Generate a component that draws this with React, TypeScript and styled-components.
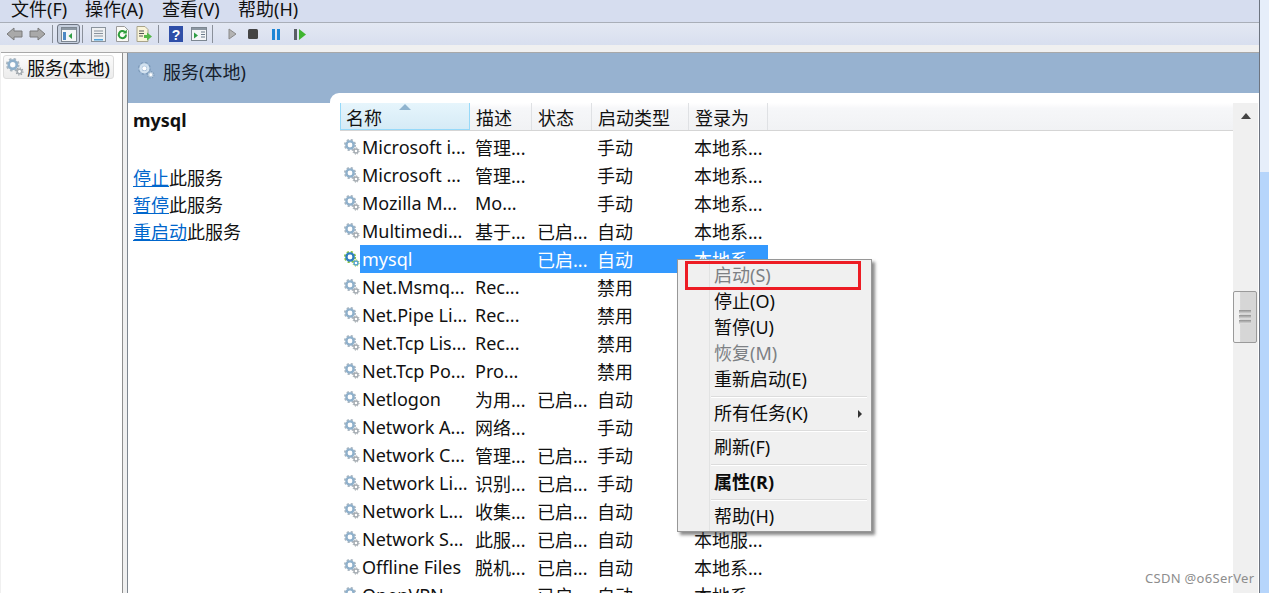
import React from "react";
import styled, { createGlobalStyle } from "styled-components";

const FONT = `"Noto Sans", "Noto Sans CJK SC", sans-serif`;

const GlobalStyle = createGlobalStyle`
  html, body {
    margin: 0;
    padding: 0;
    overflow: hidden;
  }
  body {
    font-family: ${FONT};
    color: #111;
  }
`;

const Page = styled.div`
  position: relative;
  width: 1269px;
  height: 593px;
  overflow: hidden;
  display: flex;
  background: #f0f0f0;
`;

const WindowBody = styled.div`
  flex: 1;
  min-width: 0;
  display: flex;
  flex-direction: column;
  padding-left: 1px;
  border-right: 1px solid #6d7480;
`;

const Glass = styled.div`
  width: 9px;
  background: linear-gradient(#e6eefa 0, #e6eefa 172px, #b6d5fb 172px);
`;

const MenuBar = styled.div`
  height: 22px;
  flex: none;
  display: flex;
  overflow: hidden;
  background: #d6ddef;
  border-bottom: 1px solid #a9aeb8;
  margin-left: -1px;
`;

const MenuItem = styled.span<{ $w: number }>`
  width: ${(p) => p.$w}px;
  flex: none;
  font-size: 18px;
  line-height: 18px;
  white-space: nowrap;
  &:first-child {
    margin-left: 11px;
  }
`;

const ToolBar = styled.div`
  height: 22px;
  flex: none;
  display: flex;
  align-items: center;
  margin-left: -1px;
  background: linear-gradient(#e3e8f3, #d8dfef);
`;

const ToolIcon = styled.span<{ $left?: number; $w: number }>`
  flex: none;
  width: ${(p) => p.$w}px;
  margin-left: ${(p) => p.$left ?? 0}px;
  height: 20px;
  display: flex;
  align-items: center;
  justify-content: center;
`;

const ToolPressed = styled(ToolIcon)`
  border: 1px solid #6e7582;
  border-radius: 3px;
  background: #c6cfde;
  box-sizing: border-box;
`;

const ToolSep = styled.span<{ $left: number }>`
  flex: none;
  width: 1px;
  height: 18px;
  margin-left: ${(p) => p.$left}px;
  background: #8a909a;
`;

const Spacer = styled.div`
  height: 7px;
  flex: none;
  background: #f0f0f0;
  border-bottom: 1px solid #a8a8a8;
`;

const Split = styled.div`
  flex: 1;
  min-height: 0;
  display: flex;
`;

const TreePane = styled.div`
  width: 122px;
  flex: none;
  background: #fff;
  padding: 2px 8px 0 2px;
  box-sizing: border-box;
  border-right: 1px solid #8f8f8f;
`;

const TreeItem = styled.div`
  height: 24px;
  box-sizing: border-box;
  display: flex;
  align-items: center;
  gap: 3px;
  padding-left: 2px;
  border: 1px solid #dcdcdc;
  border-radius: 3px;
  background: linear-gradient(#fbfbfb, #ececec);
  font-size: 18px;
  white-space: nowrap;
`;

const Sash = styled.div`
  width: 4px;
  flex: none;
  background: #f0f0f0;
  border-right: 1px solid #7f8790;
`;

const ContentPane = styled.div`
  flex: 1;
  min-width: 0;
  display: flex;
  flex-direction: column;
  background: #97b2d0;
`;

const Banner = styled.div`
  height: 40px;
  flex: none;
  box-sizing: border-box;
  display: flex;
  align-items: center;
  gap: 8px;
  padding: 0 0 5px 10px;
  font-size: 18px;
  color: #16202c;
`;

const Lower = styled.div`
  flex: 1;
  min-height: 0;
  display: flex;
`;

const Extended = styled.div`
  width: 202px;
  flex: none;
  margin-top: 10px;
  padding: 6px 0 0 5px;
  box-sizing: border-box;
  background: #fff;
  font-size: 18px;
`;

const ServiceName = styled.div`
  font-weight: 700;
  line-height: 22px;
  margin-bottom: 34px;
`;

const ActionLine = styled.div`
  line-height: 27px;
  height: 27px;
  white-space: nowrap;
`;

const ActionLink = styled.a`
  color: #0066cc;
  text-decoration: underline;
`;

const ListPane = styled.div`
  flex: 1;
  min-width: 0;
  display: flex;
  background: #fff;
  border-top-left-radius: 9px;
  padding: 10px 1px 0 10px;
`;

const ListColumn = styled.div`
  flex: 1;
  min-width: 0;
`;

const HeaderRow = styled.div`
  height: 28px;
  display: flex;
  margin-bottom: 2px;
  background: linear-gradient(#fff, #f6f7f9 20%, #f1f2f4);
  border-bottom: 1px solid #d5d5d5;
  box-sizing: border-box;
`;

const HeaderCell = styled.div<{ $w: number; $sorted?: boolean }>`
  position: relative;
  width: ${(p) => p.$w}px;
  flex: none;
  box-sizing: border-box;
  padding-left: ${(p) => (p.$sorted ? 5 : 6)}px;
  font-size: 18px;
  line-height: 31px;
  white-space: nowrap;
  border-right: 1px solid ${(p) => (p.$sorted ? "#96d9f9" : "#dfe1e4")};
  ${(p) =>
    p.$sorted &&
    `border-left: 1px solid #96d9f9;
     border-bottom: 1px solid #96d9f9;
     background: linear-gradient(#e6f5fc, #d6ebf6);`}
`;

const SortArrow = styled.svg`
  position: absolute;
  left: 58px;
  top: 1px;
`;

const Row = styled.div`
  height: 28px;
  display: flex;
  align-items: center;
  font-size: 18px;
  white-space: nowrap;
`;

const GearCell = styled.span`
  width: 20px;
  padding-left: 4px;
  box-sizing: border-box;
  flex: none;
  display: flex;
  align-items: center;
`;

const SelectedBand = styled.div<{ $on: boolean }>`
  display: flex;
  align-items: center;
  height: 28px;
  width: 408px;
  flex: none;
  ${(p) => p.$on && "background: #3399ff; color: #fff;"}
`;

const Cell = styled.span<{ $w: number; $pad?: number }>`
  width: ${(p) => p.$w}px;
  flex: none;
  box-sizing: border-box;
  padding-left: ${(p) => p.$pad ?? 5}px;
  overflow: hidden;
`;

const ScrollBar = styled.div`
  position: relative;
  width: 25px;
  flex: none;
  background: #f0f0f0;
  box-sizing: border-box;
`;

const ScrollUp = styled.svg`
  position: absolute;
  left: 8px;
  top: 10px;
`;

const Thumb = styled.div`
  position: absolute;
  left: 0;
  top: 188px;
  width: 24px;
  height: 52px;
  box-sizing: border-box;
  border: 1px solid #9a9a9a;
  border-radius: 2px;
  background: linear-gradient(90deg, #f2f2f2 0, #f2f2f2 25%, #d6d6d6 30%, #d6d6d6 100%);
  display: flex;
  flex-direction: column;
  align-items: center;
  justify-content: center;
  gap: 1px;
`;

const Grip = styled.span`
  width: 12px;
  height: 4px;
  background: linear-gradient(#8f8f8f, #e4e4e4);
`;

const ContextMenu = styled.div`
  position: absolute;
  left: 677px;
  top: 259px;
  width: 195px;
  height: 273px;
  box-sizing: border-box;
  padding: 2px 0 0 1px;
  font-size: 18px;
  color: #0c0c0c;
  background: linear-gradient(90deg, #f0f0f0 0, #f0f0f0 31px, #e2e3e3 31px, #e2e3e3 32px, #f0f0f0 32px);
  border: 1px solid #979797;
  box-shadow: 3px 3px 3px rgba(60, 60, 60, 0.6);
`;

const MenuEntry = styled.div<{ $h: number; $disabled?: boolean; $bold?: boolean }>`
  position: relative;
  height: ${(p) => p.$h}px;
  line-height: ${(p) => p.$h}px;
  padding-left: 35px;
  white-space: nowrap;
  color: ${(p) => (p.$disabled ? "#7d8084" : "inherit")};
  font-weight: ${(p) => (p.$bold ? 700 : 400)};
`;

const MenuDivider = styled.div<{ $top?: number }>`
  height: 1px;
  margin: ${(p) => p.$top ?? 3}px 4px 3px 32px;
  background: #dcdcdc;
  box-shadow: 0 1px 0 #fff;
`;

const SubArrow = styled.span`
  position: absolute;
  right: 9px;
  top: 10px;
  border-left: 4px solid #333;
  border-top: 4px solid transparent;
  border-bottom: 4px solid transparent;
`;

const Highlight = styled.div`
  position: absolute;
  left: 685px;
  top: 261px;
  width: 176px;
  height: 29px;
  box-sizing: border-box;
  border: 3px solid #ed1c24;
`;

const Watermark = styled.div`
  position: absolute;
  left: 1145px;
  top: 569px;
  font-size: 13px;
  line-height: 18px;
  letter-spacing: 0.3px;
  color: #8d8d8d;
`;

type GearTone = "idle" | "active" | "banner";

const GEAR_TONES: Record<GearTone, [string, string, string, string]> = {
  idle: ["#aab6c0", "#8fb0cb", "#a4abb1", "#98a0a7"],
  active: ["#86c440", "#2f7fc1", "#4f9fd0", "#86c440"],
  banner: ["#7d9bba", "#d3e2ef", "#b9cbdc", "#7f9cb8"],
};

const Gear = ({ tone = "idle", size = 16 }: { tone?: GearTone; size?: number }) => {
  const [teeth, ring, smallRing, smallTeeth] = GEAR_TONES[tone];
  return (
    <svg width={size} height={size} viewBox="0 0 16 16">
      <circle cx="6" cy="6" r="5.2" fill="none" stroke={teeth} strokeWidth="1.8" strokeDasharray="2.2 1.9" />
      <circle cx="6" cy="6" r="3.6" fill="none" stroke={ring} strokeWidth="2.4" />
      <circle cx="6" cy="6" r="2" fill="#fff" />
      <circle cx="12" cy="12" r="2" fill="#fff" stroke={smallRing} strokeWidth="1.4" />
      <circle cx="12" cy="12" r="3.1" fill="none" stroke={smallTeeth} strokeWidth="1" strokeDasharray="1.2 1.2" />
    </svg>
  );
};

const BackArrow = ({ flip }: { flip?: boolean }) => (
  <svg width="17" height="14" viewBox="0 0 17 14" style={flip ? { transform: "scaleX(-1)" } : undefined}>
    <path d="M1 7 8 1v3h8v6H8v3z" fill="#a9a9a9" stroke="#7b7b7b" />
  </svg>
);

const PanelGlyph = () => (
  <svg width="16" height="15" viewBox="0 0 16 15">
    <rect x="0.5" y="0.5" width="15" height="14" fill="#f4f6f8" stroke="#7d8791" />
    <rect x="1" y="1" width="14" height="2" fill="#8d98a3" />
    <rect x="2" y="5" width="3" height="8" fill="#4c88c4" />
    <path d="M11 6v6L7.5 9z" fill="#2f9e45" />
  </svg>
);

const ListGlyph = () => (
  <svg width="15" height="15" viewBox="0 0 15 15">
    <rect x="0.5" y="0.5" width="14" height="14" fill="#eef0f2" stroke="#8a939c" />
    <path d="M3 4h9M3 6.5h9M3 9h9" stroke="#8a939c" />
    <rect x="3" y="12" width="9" height="1.5" fill="#4ea3dc" />
  </svg>
);

const RefreshGlyph = () => (
  <svg width="15" height="16" viewBox="0 0 15 16">
    <path d="M1.5.5h8l4 4v11h-12z" fill="#fbfbf6" stroke="#9a9a9a" />
    <path d="M11 8.5a3.6 3.6 0 1 1-1.2-2.6" fill="none" stroke="#2c9d3a" strokeWidth="2" />
    <path d="M11.8 3.6v4h-4z" fill="#2c9d3a" />
  </svg>
);

const ExportGlyph = () => (
  <svg width="16" height="16" viewBox="0 0 16 16">
    <path d="M1 .5h8l3 3v12H1z" fill="#f9f4d8" stroke="#a8a38a" />
    <path d="M3 5h5M3 7.5h5M3 10h4" stroke="#555" />
    <path d="M8 9h3V6.5l5 4-5 4V12H8z" fill="#55b848" />
  </svg>
);

const HelpGlyph = () => (
  <svg width="14" height="16" viewBox="0 0 14 16">
    <rect width="14" height="16" fill="#2f4fa8" />
    <text x="7" y="13.5" textAnchor="middle" fontSize="14" fontWeight="700" fill="#fff" fontFamily="Liberation Sans, sans-serif">?</text>
  </svg>
);

const PanelPlayGlyph = () => (
  <svg width="16" height="14" viewBox="0 0 16 14">
    <rect x="0.5" y="0.5" width="15" height="13" fill="#f4f6f8" stroke="#7d8791" />
    <rect x="1" y="1" width="14" height="2" fill="#8d98a3" />
    <path d="M3 5.5v6l4-3z" fill="#2f9e45" />
    <path d="M10 5h4M10 7.5h4M10 10h4" stroke="#6a7a8a" />
  </svg>
);

const PlayGlyph = () => (
  <svg width="9" height="12" viewBox="0 0 9 12">
    <path d="M1 1v10l7-5z" fill="#b3b3b3" stroke="#8a8a8a" />
  </svg>
);

const StopGlyph = () => (
  <svg width="10" height="10" viewBox="0 0 10 10">
    <rect width="10" height="10" rx="1.5" fill="#444" />
  </svg>
);

const PauseGlyph = () => (
  <svg width="8" height="11" viewBox="0 0 8 11">
    <rect width="3" height="11" fill="#1c86d6" />
    <rect x="5" width="3" height="11" fill="#1c86d6" />
  </svg>
);

const ResumeGlyph = () => (
  <svg width="12" height="11" viewBox="0 0 12 11">
    <rect width="3" height="11" fill="#5a5f66" />
    <path d="M5 0v11l7-5.5z" fill="#3fb52f" />
  </svg>
);

type Service = [string, string, string, string, string];

const SERVICES: Service[] = [
  ["Microsoft i...", "管理...", "", "手动", "本地系..."],
  ["Microsoft ...", "管理...", "", "手动", "本地系..."],
  ["Mozilla M...", "Mo...", "", "手动", "本地系..."],
  ["Multimedi...", "基于...", "已启...", "自动", "本地系..."],
  ["mysql", "", "已启...", "自动", "本地系..."],
  ["Net.Msmq...", "Rec...", "", "禁用", "网络服..."],
  ["Net.Pipe Li...", "Rec...", "", "禁用", "本地服..."],
  ["Net.Tcp Lis...", "Rec...", "", "禁用", "本地服..."],
  ["Net.Tcp Po...", "Pro...", "", "禁用", "本地服..."],
  ["Netlogon", "为用...", "已启...", "自动", "本地系..."],
  ["Network A...", "网络...", "", "手动", "本地系..."],
  ["Network C...", "管理...", "已启...", "手动", "本地系..."],
  ["Network Li...", "识别...", "已启...", "手动", "本地服..."],
  ["Network L...", "收集...", "已启...", "自动", "网络服..."],
  ["Network S...", "此服...", "已启...", "自动", "本地服..."],
  ["Offline Files", "脱机...", "已启...", "自动", "本地系..."],
  ["OpenVPN ...", "", "已启...", "自动", "本地系..."],
];

const COLS = [110, 62, 60, 97, 79];

const App = () => (
  <Page>
    <GlobalStyle />
    <WindowBody>
      <MenuBar>
        <MenuItem $w={74}>文件(F)</MenuItem>
        <MenuItem $w={77}>操作(A)</MenuItem>
        <MenuItem $w={76}>查看(V)</MenuItem>
        <MenuItem $w={80}>帮助(H)</MenuItem>
      </MenuBar>
      <ToolBar>
        <ToolIcon $left={5} $w={18}><BackArrow /></ToolIcon>
        <ToolIcon $left={5} $w={18}><BackArrow flip /></ToolIcon>
        <ToolSep $left={6} />
        <ToolPressed $left={4} $w={23}><PanelGlyph /></ToolPressed>
        <ToolSep $left={2} />
        <ToolIcon $left={8} $w={15}><ListGlyph /></ToolIcon>
        <ToolIcon $left={9} $w={15}><RefreshGlyph /></ToolIcon>
        <ToolIcon $left={6} $w={16}><ExportGlyph /></ToolIcon>
        <ToolSep $left={6} />
        <ToolIcon $left={10} $w={14}><HelpGlyph /></ToolIcon>
        <ToolIcon $left={8} $w={16}><PanelPlayGlyph /></ToolIcon>
        <ToolSep $left={5} />
        <ToolIcon $left={15} $w={9}><PlayGlyph /></ToolIcon>
        <ToolIcon $left={11} $w={10}><StopGlyph /></ToolIcon>
        <ToolIcon $left={14} $w={8}><PauseGlyph /></ToolIcon>
        <ToolIcon $left={14} $w={12}><ResumeGlyph /></ToolIcon>
      </ToolBar>
      <Spacer />
      <Split>
        <TreePane>
          <TreeItem><Gear size={18} />服务(本地)</TreeItem>
        </TreePane>
        <Sash />
        <ContentPane>
          <Banner><Gear tone="banner" size={17} />服务(本地)</Banner>
          <Lower>
            <Extended>
              <ServiceName>mysql</ServiceName>
              <ActionLine><ActionLink>停止</ActionLink>此服务</ActionLine>
              <ActionLine><ActionLink>暂停</ActionLink>此服务</ActionLine>
              <ActionLine><ActionLink>重启动</ActionLink>此服务</ActionLine>
            </Extended>
            <ListPane>
              <ListColumn>
                <HeaderRow>
                  <HeaderCell $w={COLS[0] + 20} $sorted>
                    名称
                    <SortArrow width="12" height="6" viewBox="0 0 12 6">
                      <path d="M6 0 12 6H0z" fill="#8fb4cf" />
                    </SortArrow>
                  </HeaderCell>
                  <HeaderCell $w={COLS[1]}>描述</HeaderCell>
                  <HeaderCell $w={COLS[2]}>状态</HeaderCell>
                  <HeaderCell $w={COLS[3]}>启动类型</HeaderCell>
                  <HeaderCell $w={COLS[4]}>登录为</HeaderCell>
                </HeaderRow>
                {SERVICES.map((s) => (
                  <Row key={s[0]}>
                    <GearCell><Gear tone={s[0] === "mysql" ? "active" : "idle"} /></GearCell>
                    <SelectedBand $on={s[0] === "mysql"}>
                      <Cell $w={COLS[0]} $pad={2}>{s[0]}</Cell>
                      <Cell $w={COLS[1]}>{s[1]}</Cell>
                      <Cell $w={COLS[2]}>{s[2]}</Cell>
                      <Cell $w={COLS[3]}>{s[3]}</Cell>
                      <Cell $w={COLS[4]}>{s[4]}</Cell>
                    </SelectedBand>
                  </Row>
                ))}
              </ListColumn>
              <ScrollBar>
                <ScrollUp width="10" height="6" viewBox="0 0 10 6">
                  <path d="M5 0 10 6H0z" fill="#444" />
                </ScrollUp>
                <Thumb>
                  <Grip />
                  <Grip />
                  <Grip />
                </Thumb>
              </ScrollBar>
            </ListPane>
          </Lower>
        </ContentPane>
      </Split>
    </WindowBody>
    <Glass />
    <ContextMenu>
      <MenuEntry $h={26} $disabled>启动(S)</MenuEntry>
      <MenuEntry $h={26}>停止(O)</MenuEntry>
      <MenuEntry $h={26}>暂停(U)</MenuEntry>
      <MenuEntry $h={26} $disabled>恢复(M)</MenuEntry>
      <MenuEntry $h={26}>重新启动(E)</MenuEntry>
      <MenuDivider $top={4} />
      <MenuEntry $h={27}>所有任务(K)<SubArrow /></MenuEntry>
      <MenuDivider />
      <MenuEntry $h={27}>刷新(F)</MenuEntry>
      <MenuDivider />
      <MenuEntry $h={28} $bold>属性(R)</MenuEntry>
      <MenuDivider />
      <MenuEntry $h={27}>帮助(H)</MenuEntry>
    </ContextMenu>
    <Highlight />
    <Watermark>CSDN @o6SerVer</Watermark>
  </Page>
);

export default App;
